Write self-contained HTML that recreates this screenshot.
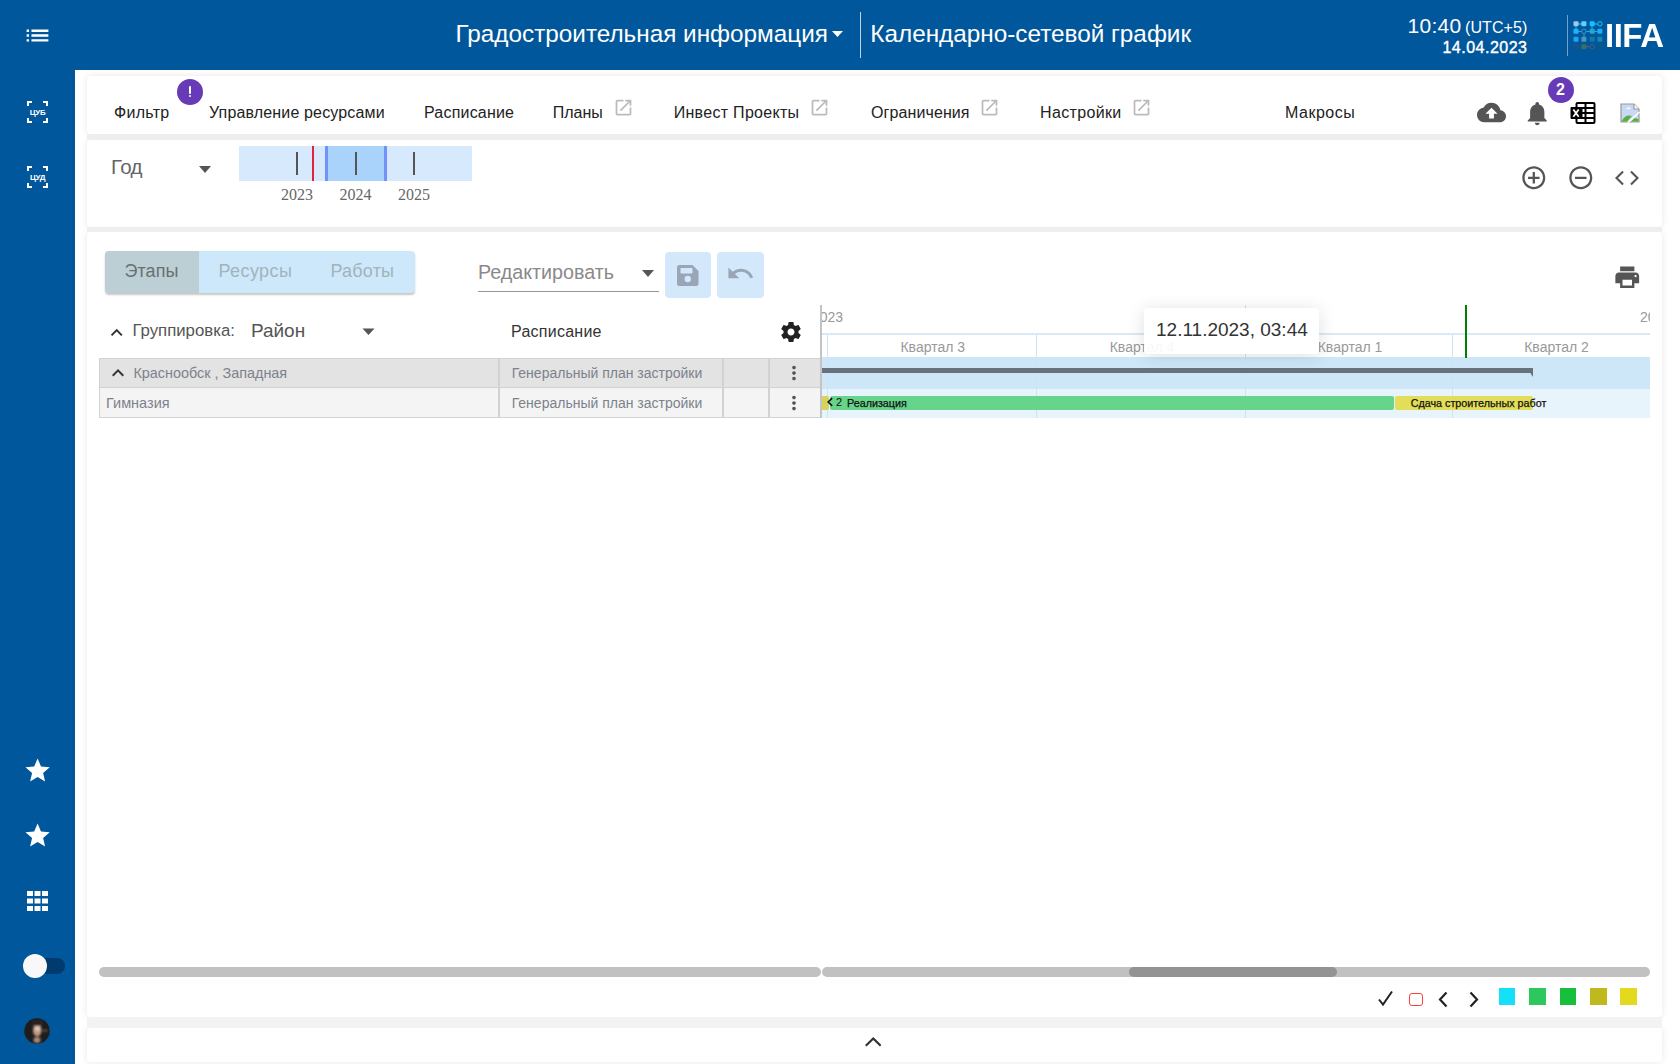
<!DOCTYPE html>
<html><head><meta charset="utf-8">
<style>
*{box-sizing:border-box;margin:0;padding:0}
html,body{width:1680px;height:1064px;overflow:hidden;background:#fff;font-family:"Liberation Sans",sans-serif;}
.a{position:absolute}
.t{position:absolute;white-space:nowrap;line-height:1}
svg{position:absolute;display:block}
.card{position:absolute;left:87px;width:1575px;background:#fff;border-radius:4px;box-shadow:0 0 7px rgba(0,0,0,0.10)}
.gap{position:absolute;left:87px;width:1575px;background:#eeeeee}
</style></head><body>

<!-- sidebar & header -->
<div class="a" style="left:0;top:0;width:1680px;height:70px;background:#01579b"></div>
<div class="a" style="left:0;top:0;width:75px;height:1064px;background:#01579b"></div>

<!-- header content -->
<svg style="left:23px;top:20.5px" width="29" height="29" viewBox="0 0 24 24"><path fill="#fff" d="M3 13h2v-2H3v2zm0 4h2v-2H3v2zm0-8h2V7H3v2zm4 4h14v-2H7v2zm0 4h14v-2H7v2zM7 7v2h14V7H7z"/></svg>
<div class="t" style="left:455.5px;top:21.9px;font-size:24.3px;color:#fff">Градостроительная информация</div>
<svg style="left:832px;top:31px" width="11" height="6" viewBox="0 0 11 6"><path fill="#fff" d="M0 0h11L5.5 6z"/></svg>
<div class="a" style="left:860px;top:12px;width:1px;height:46px;background:rgba(255,255,255,0.75)"></div>
<div class="t" style="left:870.3px;top:21.9px;font-size:24.3px;color:#fff">Календарно-сетевой график</div>
<div class="t" style="left:1407.5px;top:15.4px;font-size:21px;color:#fff;letter-spacing:0.3px">10:40</div>
<div class="t" style="left:1465px;top:19.5px;font-size:16px;color:#fff;letter-spacing:0.1px">(UTC+5)</div>
<div class="t" style="right:152.5px;top:39.5px;font-size:16px;color:#fff;-webkit-text-stroke:0.4px #fff;letter-spacing:0.5px">14.04.2023</div>
<div class="a" style="left:1567px;top:15px;width:1px;height:41px;background:rgba(255,255,255,0.45)"></div>
<svg style="left:1572px;top:20px" width="32" height="30" viewBox="1572 20 32 30">
 <g stroke-width="1">
  <line x1="1576" y1="24" x2="1584" y2="24" stroke="#5dc8f5"/>
  <line x1="1592" y1="24" x2="1600" y2="24" stroke="#2dc0f0"/>
  <line x1="1576" y1="31.5" x2="1600" y2="31.5" stroke="#2aa8d8"/>
  <line x1="1584" y1="31.5" x2="1584" y2="39.5" stroke="#3a9ad0"/>
  <line x1="1576" y1="24" x2="1576" y2="31.5" stroke="#3ab0e8"/>
  <line x1="1592" y1="24" x2="1592" y2="31.5" stroke="#20b0e0"/>
  <line x1="1584" y1="46.7" x2="1592" y2="46.7" stroke="#6a5a6a"/>
 </g>
 <rect x="1573.5" y="21.3" width="5" height="5" rx="1" fill="#9cc8ec"/>
 <rect x="1581.4" y="21.3" width="5" height="5" rx="1" fill="#5dd0ff"/>
 <rect x="1589.7" y="21.3" width="5" height="5" rx="1" fill="#10c0ff"/>
 <circle cx="1599.9" cy="23.8" r="2.2" fill="#01579b" stroke="#2dc0f0" stroke-width="1"/>
 <rect x="1573.5" y="28.8" width="5" height="5" rx="1" fill="#18b8f8"/>
 <circle cx="1583.9" cy="31.3" r="2.2" fill="#01579b" stroke="#3a9ad0" stroke-width="1"/>
 <rect x="1589.7" y="28.8" width="5" height="5" rx="1" fill="#20a8d0"/>
 <rect x="1597.4" y="28.8" width="5" height="5" rx="1" fill="#18b0f0"/>
 <rect x="1573.5" y="36.8" width="5" height="5" rx="1" fill="#18a8f0"/>
 <rect x="1581.4" y="36.8" width="5" height="5" rx="1" fill="#4898b8"/>
 <rect x="1589.7" y="36.8" width="5" height="5" rx="1" fill="#107aa0"/>
 <rect x="1597.4" y="36.8" width="5" height="5" rx="1" fill="#1488b0"/>
 <circle cx="1576.1" cy="46.7" r="2.2" fill="#01579b" stroke="#4a4a6a" stroke-width="0.8"/>
 <rect x="1581.4" y="44.2" width="5" height="5" rx="1" fill="#3a7060"/>
 <circle cx="1592.2" cy="46.7" r="2.2" fill="#01579b" stroke="#5a5a7a" stroke-width="0.8"/>
 <rect x="1597.4" y="44.2" width="5" height="5" rx="1" fill="#0a5a80"/>
</svg>
<div class="t" style="left:1605px;top:18px;font-size:34px;font-weight:bold;color:#fff;transform:scaleX(0.97);transform-origin:0 0;letter-spacing:-0.5px">IIFA</div>

<!-- sidebar icons -->
<div class="a" style="left:27px;top:101px;width:21px;height:22px">
 <div class="a" style="left:0;top:0;width:5px;height:5px;border-left:2px solid #fff;border-top:2px solid #fff"></div>
 <div class="a" style="right:0;top:0;width:5px;height:5px;border-right:2px solid #fff;border-top:2px solid #fff"></div>
 <div class="a" style="left:0;bottom:0;width:5px;height:5px;border-left:2px solid #fff;border-bottom:2px solid #fff"></div>
 <div class="a" style="right:0;bottom:0;width:5px;height:5px;border-right:2px solid #fff;border-bottom:2px solid #fff"></div>
 <div class="t" style="left:0;width:21px;top:8px;text-align:center;font-size:8px;font-weight:bold;color:#fff;letter-spacing:-0.3px">ЦУБ</div>
</div>
<div class="a" style="left:27px;top:166px;width:21px;height:22px">
 <div class="a" style="left:0;top:0;width:5px;height:5px;border-left:2px solid #fff;border-top:2px solid #fff"></div>
 <div class="a" style="right:0;top:0;width:5px;height:5px;border-right:2px solid #fff;border-top:2px solid #fff"></div>
 <div class="a" style="left:0;bottom:0;width:5px;height:5px;border-left:2px solid #fff;border-bottom:2px solid #fff"></div>
 <div class="a" style="right:0;bottom:0;width:5px;height:5px;border-right:2px solid #fff;border-bottom:2px solid #fff"></div>
 <div class="t" style="left:0;width:21px;top:8px;text-align:center;font-size:8px;font-weight:bold;color:#fff;letter-spacing:-0.3px">ЦУД</div>
</div>
<svg style="left:22.6px;top:755.9px" width="29.2" height="29.2" viewBox="0 0 24 24"><path fill="#fff" d="M12 17.27L18.18 21l-1.64-7.03L22 9.24l-7.19-.61L12 2 9.19 8.63 2 9.24l5.46 4.73L5.82 21z"/></svg>
<svg style="left:22.6px;top:821.3px" width="29.2" height="29.2" viewBox="0 0 24 24"><path fill="#fff" d="M12 17.27L18.18 21l-1.64-7.03L22 9.24l-7.19-.61L12 2 9.19 8.63 2 9.24l5.46 4.73L5.82 21z"/></svg>
<svg style="left:26.5px;top:890.5px" width="21" height="20" viewBox="0 0 21 20"><g fill="#fff"><rect x="0" y="0" width="6" height="5"/><rect x="7.5" y="0" width="6" height="5"/><rect x="15" y="0" width="6" height="5"/><rect x="0" y="7.5" width="6" height="5"/><rect x="7.5" y="7.5" width="6" height="5"/><rect x="15" y="7.5" width="6" height="5"/><rect x="0" y="15" width="6" height="5"/><rect x="7.5" y="15" width="6" height="5"/><rect x="15" y="15" width="6" height="5"/></g></svg>
<div class="a" style="left:24px;top:958px;width:41px;height:16px;border-radius:8px;background:#003a6e"></div>
<div class="a" style="left:23px;top:954px;width:24px;height:24px;border-radius:50%;background:#f8f8f8"></div>
<svg style="left:24.4px;top:1018.4px" width="26" height="26" viewBox="0 0 26 26">
 <defs><clipPath id="avc"><circle cx="13" cy="13" r="12.7"/></clipPath><filter id="avb" x="-50%" y="-50%" width="200%" height="200%"><feGaussianBlur stdDeviation="1.1"/></filter></defs>
 <circle cx="13" cy="13" r="12.7" fill="#1e1c1c"/>
 <g clip-path="url(#avc)" filter="url(#avb)">
  <ellipse cx="13.2" cy="12.5" rx="4.2" ry="6" fill="#c09a86"/>
  <ellipse cx="13.5" cy="10.5" rx="3.2" ry="2.5" fill="#e0c2b0"/>
  <ellipse cx="13" cy="22" rx="3.5" ry="3" fill="#a88a78"/>
  <ellipse cx="21" cy="12.5" rx="3" ry="1" fill="#6a584c"/>
  <rect x="8" y="2" width="11" height="6" fill="#2a2420"/>
 </g>
</svg>

<!-- cards -->
<div class="card" style="top:76px;height:58px"></div>
<div class="card" style="top:140px;height:87px"></div>
<div class="card" style="top:232px;height:785px"></div>
<div class="card" style="top:1028px;height:33.5px"></div>
<div class="gap" style="top:134px;height:6px"></div>
<div class="gap" style="top:227px;height:5px"></div>
<div class="gap" style="top:1017px;height:11px;background:#f3f3f3"></div>

<!-- card 1 toolbar -->
<div class="t" style="left:114px;top:104.5px;font-size:16px;color:#222;letter-spacing:0.3px">Фильтр</div>
<div class="a" style="left:177px;top:79px;width:26px;height:26px;border-radius:50%;background:#673ab7"></div>
<div class="a" style="left:188.6px;top:86px;width:2.8px;height:8.3px;border-radius:1px;background:#fff"></div>
<div class="a" style="left:188.6px;top:94.9px;width:2.8px;height:2.3px;border-radius:1px;background:#fff"></div>
<div class="t" style="left:209px;top:104.5px;font-size:16px;color:#222;letter-spacing:0.15px">Управление ресурсами</div>
<div class="t" style="left:424px;top:104.5px;font-size:16px;color:#222;letter-spacing:0.2px">Расписание</div>
<div class="t" style="left:552.7px;top:104.5px;font-size:16px;color:#222">Планы</div>
<div class="t" style="left:673.7px;top:104.5px;font-size:16px;color:#222;letter-spacing:0.3px">Инвест Проекты</div>
<div class="t" style="left:871px;top:104.5px;font-size:16px;color:#222;letter-spacing:0.1px">Ограничения</div>
<div class="t" style="left:1040px;top:104.5px;font-size:16px;color:#222;letter-spacing:0.35px">Настройки</div>
<div class="t" style="left:1285px;top:104.5px;font-size:16px;color:#222;letter-spacing:0.5px">Макросы</div>
<svg style="left:612.5px;top:96.5px" width="21" height="21" viewBox="0 0 24 24"><path fill="#bbb" d="M19 19H5V5h7V3H5c-1.11 0-2 .9-2 2v14c0 1.1.89 2 2 2h14c1.1 0 2-.9 2-2v-7h-2v7zM14 3v2h3.59l-9.83 9.83 1.41 1.41L19 6.41V10h2V3h-7z"/></svg>
<svg style="left:808.5px;top:96.5px" width="21" height="21" viewBox="0 0 24 24"><path fill="#bbb" d="M19 19H5V5h7V3H5c-1.11 0-2 .9-2 2v14c0 1.1.89 2 2 2h14c1.1 0 2-.9 2-2v-7h-2v7zM14 3v2h3.59l-9.83 9.83 1.41 1.41L19 6.41V10h2V3h-7z"/></svg>
<svg style="left:978.5px;top:96.5px" width="21" height="21" viewBox="0 0 24 24"><path fill="#bbb" d="M19 19H5V5h7V3H5c-1.11 0-2 .9-2 2v14c0 1.1.89 2 2 2h14c1.1 0 2-.9 2-2v-7h-2v7zM14 3v2h3.59l-9.83 9.83 1.41 1.41L19 6.41V10h2V3h-7z"/></svg>
<svg style="left:1130.5px;top:96.5px" width="21" height="21" viewBox="0 0 24 24"><path fill="#bbb" d="M19 19H5V5h7V3H5c-1.11 0-2 .9-2 2v14c0 1.1.89 2 2 2h14c1.1 0 2-.9 2-2v-7h-2v7zM14 3v2h3.59l-9.83 9.83 1.41 1.41L19 6.41V10h2V3h-7z"/></svg>
<svg style="left:1477px;top:97.5px" width="29" height="29" viewBox="0 0 24 24"><path fill="#555" d="M19.35 10.04C18.67 6.59 15.64 4 12 4 9.11 4 6.6 5.64 5.35 8.04 2.34 8.36 0 10.91 0 14c0 3.31 2.69 6 6 6h13c2.76 0 5-2.24 5-5 0-2.64-2.05-4.78-4.65-4.96zM14 13v4h-4v-4H7l5-5 5 5h-3z"/></svg>
<svg style="left:1523.3px;top:98.7px" width="28.5" height="28.5" viewBox="0 0 24 24"><path fill="#555" d="M12 22c1.1 0 2-.9 2-2h-4c0 1.1.89 2 2 2zm6-6v-5c0-3.07-1.64-5.640-4.5-6.32V4c0-.83-.67-1.5-1.5-1.5s-1.5.67-1.5 1.5v.68C7.63 5.36 6 7.92 6 11v5l-2 2v1h16v-1l-2-2z"/></svg>
<div class="a" style="left:1547.5px;top:76.5px;width:26px;height:26px;border-radius:50%;background:#673ab7"></div>
<div class="t" style="left:1547.5px;width:26px;text-align:center;top:82px;font-size:16px;font-weight:bold;color:#fff">2</div>
<svg style="left:1570px;top:102px" width="26" height="22" viewBox="0 0 26 22">
 <rect x="6.5" y="1" width="18" height="20" rx="1" fill="#fff" stroke="#000" stroke-width="2"/>
 <line x1="15.5" y1="1" x2="15.5" y2="21" stroke="#000" stroke-width="2"/>
 <line x1="6.5" y1="6" x2="24.5" y2="6" stroke="#000" stroke-width="2"/>
 <line x1="6.5" y1="11" x2="24.5" y2="11" stroke="#000" stroke-width="2"/>
 <line x1="6.5" y1="16" x2="24.5" y2="16" stroke="#000" stroke-width="2"/>
 <rect x="0.5" y="5" width="12" height="12" rx="1" fill="#000"/>
 <path d="M3.3 7.5l5.4 7.2M8.7 7.5l-5.4 7.2" stroke="#fff" stroke-width="1.8"/>
</svg>
<svg style="left:1620px;top:103px" width="21" height="20" viewBox="0 0 21 20">
 <path d="M1 1h13l5 5v13H1z" fill="#c6daf3" stroke="#999" stroke-width="1.2"/>
 <path d="M14 1v5h5" fill="#fff" stroke="#999" stroke-width="1.2"/>
 <path d="M6 6l2.5-2 2.5 2z" fill="#fff"/>
 <path d="M1.6 18.4C4 13 8 11.5 12 13 L7 18.4z" fill="#5ab03a"/>
 <path d="M14 15.5C16 15 18 16 18.4 16.5V18.4H11z" fill="#5ab03a"/>
 <path d="M8 19.5L19.5 9" stroke="#fff" stroke-width="1.6"/>
</svg>

<!-- card 2 -->
<div class="t" style="left:111px;top:157.4px;font-size:20.5px;color:#666;letter-spacing:-0.6px">Год</div>
<svg style="left:198px;top:165px" width="14" height="9" viewBox="0 0 14 9"><path fill="#555" d="M1 1h12L7 8z"/></svg>
<div class="a" style="left:239px;top:145.5px;width:233px;height:35px;background:#d6e9fd"></div>
<div class="a" style="left:326px;top:145.5px;width:60px;height:35px;background:#a9d3fb"></div>
<div class="a" style="left:325px;top:145.5px;width:2.6px;height:35px;background:#7292fa"></div>
<div class="a" style="left:384px;top:145.5px;width:2.6px;height:35px;background:#7292fa"></div>
<div class="a" style="left:296px;top:151.5px;width:2px;height:23px;background:#555"></div>
<div class="a" style="left:354.5px;top:151.5px;width:2px;height:23px;background:#555"></div>
<div class="a" style="left:413px;top:151.5px;width:2px;height:23px;background:#555"></div>
<div class="a" style="left:312.3px;top:145.5px;width:2px;height:35px;background:#e0243c"></div>
<div class="t" style="left:267px;width:60px;text-align:center;top:186.5px;font-family:'Liberation Serif',serif;font-size:16px;color:#666">2023</div>
<div class="t" style="left:325.5px;width:60px;text-align:center;top:186.5px;font-family:'Liberation Serif',serif;font-size:16px;color:#666">2024</div>
<div class="t" style="left:384px;width:60px;text-align:center;top:186.5px;font-family:'Liberation Serif',serif;font-size:16px;color:#666">2025</div>
<svg style="left:1520.2px;top:164.2px" width="27.6" height="27.6" viewBox="0 0 24 24"><path fill="#555" d="M13 7h-2v4H7v2h4v4h2v-4h4v-2h-4V7zm-1-5C6.48 2 2 6.48 2 12s4.48 10 10 10 10-4.48 10-10S17.52 2 12 2zm0 18c-4.41 0-8-3.59-8-8s3.59-8 8-8 8 3.59 8 8-3.59 8-8 8z"/></svg>
<svg style="left:1566.7px;top:164.2px" width="27.6" height="27.6" viewBox="0 0 24 24"><path fill="#555" d="M7 11v2h10v-2H7zm5-9C6.48 2 2 6.48 2 12s4.48 10 10 10 10-4.48 10-10S17.52 2 12 2zm0 18c-4.41 0-8-3.59-8-8s3.59-8 8-8 8 3.59 8 8-3.59 8-8 8z"/></svg>
<svg style="left:1613px;top:164px" width="28" height="28" viewBox="0 0 24 24"><path fill="none" stroke="#555" stroke-width="1.8" d="M8.6 6.4L3 12l5.6 5.6M15.4 6.4L21 12l-5.6 5.6"/></svg>

<!-- card 3 toolbar -->
<div class="a" style="left:105px;top:250.5px;width:310px;height:42px;border-radius:4px;background:#cce8fa;box-shadow:0 2px 2px rgba(0,0,0,0.22);overflow:hidden">
 <div class="a" style="left:0;top:0;width:94px;height:42px;background:#bccfd5"></div>
</div>
<div class="t" style="left:124.4px;top:261.8px;font-size:18px;color:#6a6f72;letter-spacing:0.1px">Этапы</div>
<div class="t" style="left:218.5px;top:261.8px;font-size:18px;color:#a3b3ba;letter-spacing:0.4px">Ресурсы</div>
<div class="t" style="left:330.5px;top:261.8px;font-size:18px;color:#a3b3ba;letter-spacing:0.2px">Работы</div>
<div class="t" style="left:478px;top:262.9px;font-size:19.7px;color:#8a8a8a">Редактировать</div>
<div class="a" style="left:478px;top:291px;width:180.5px;height:1.3px;background:#959595"></div>
<svg style="left:641px;top:269px" width="14" height="9" viewBox="0 0 14 9"><path fill="#555" d="M1 1h12L7 8z"/></svg>
<div class="a" style="left:664.5px;top:251.7px;width:46.5px;height:46.3px;border-radius:4px;background:#d3e8fb"></div>
<div class="a" style="left:717px;top:251.7px;width:46.5px;height:46.3px;border-radius:4px;background:#d3e8fb"></div>
<svg style="left:677px;top:264.7px" width="21.5" height="21" viewBox="0 0 21.5 21"><path fill="#98a6b6" d="M2.5 0h13l6 6v12.5a2.5 2.5 0 0 1-2.5 2.5h-16.5a2.5 2.5 0 0 1-2.5-2.5v-16a2.5 2.5 0 0 1 2.5-2.5z"/><rect x="3.5" y="3" width="12" height="5.5" rx="0.8" fill="#d3e8fb"/><circle cx="10.75" cy="14" r="3.2" fill="#d3e8fb"/></svg>
<svg style="left:725.5px;top:259px" width="29" height="29" viewBox="0 0 24 24"><path fill="#98a6b6" d="M12.5 8c-2.65 0-5.050.99-6.9 2.6L2 7v9h9l-3.62-3.62c1.39-1.16 3.16-1.88 5.12-1.88 3.540 0 6.55 2.31 7.6 5.5l2.37-.78C21.08 11.03 17.15 8 12.5 8z"/></svg>
<svg style="left:1613.1px;top:262.7px" width="28.5" height="28.5" viewBox="0 0 24 24"><path fill="#555" d="M19 8H5c-1.66 0-3 1.34-3 3v6h4v4h12v-4h4v-6c0-1.66-1.34-3-3-3zm-3 11H8v-5h8v5zm3-7c-.55 0-1-.45-1-1s.45-1 1-1 1 .45 1 1-.45 1-1 1zm-1-9H6v4h12V3z"/></svg>

<!-- grouping header -->
<svg style="left:104.75px;top:320.5px" width="23.4" height="23.4" viewBox="0 0 24 24"><path fill="#333" d="M12 8l-6 6 1.41 1.41L12 10.83l4.59 4.58L18 14z"/></svg>
<div class="t" style="left:132.4px;top:323px;font-size:16.8px;color:#555">Группировка:</div>
<div class="t" style="left:250.9px;top:320.9px;font-size:19px;color:#555">Район</div>
<svg style="left:362px;top:327.5px" width="13" height="8" viewBox="0 0 13 8"><path fill="#555" d="M0.5 0.5h12L6.5 7z"/></svg>
<div class="t" style="left:511px;top:323.5px;font-size:16px;color:#333;letter-spacing:0.25px">Расписание</div>
<svg style="left:779px;top:320px" width="24" height="24" viewBox="0 0 24 24"><path fill="#222" d="M19.43 12.98c.04-.32.07-.64.07-.98s-.03-.66-.07-.98l2.11-1.65c.19-.15.24-.42.12-.64l-2-3.460c-.12-.22-.39-.3-.61-.22l-2.49 1c-.52-.4-1.08-.73-1.69-.98l-.38-2.65C14.46 2.18 14.250 2 14 2h-4c-.25 0-.46.18-.49.42l-.38 2.65c-.61.25-1.17.59-1.69.98l-2.49-1c-.23-.09-.49 0-.61.22l-2 3.46c-.13.22-.07.49.12.64l2.11 1.65c-.04.32-.07.65-.07.98s.03.66.07.98l-2.11 1.65c-.19.15-.24.42-.12.64l2 3.46c.12.22.39.3.61.22l2.49-1c.52.4 1.08.73 1.69.98l.38 2.65c.03.24.24.42.49.42h4c.25 0 .46-.18.49-.42l.38-2.65c.61-.25 1.17-.59 1.69-.98l2.49 1c.23.09.49 0 .61-.22l2-3.46c.12-.22.07-.49-.12-.64l-2.11-1.65zM12 15.5c-1.93 0-3.5-1.57-3.5-3.5s1.57-3.5 3.5-3.5 3.5 1.57 3.5 3.5-1.57 3.5-3.5 3.5z"/></svg>

<!-- table -->
<div class="a" style="left:99px;top:358px;width:722px;height:30px;background:#e3e3e3;border-top:1px solid #d2d2d2;border-bottom:1px solid #d2d2d2"></div>
<div class="a" style="left:99px;top:388px;width:722px;height:30px;background:#f4f4f4;border-bottom:1px solid #d2d2d2"></div>
<div class="a" style="left:99px;top:358px;width:1px;height:60px;background:#d2d2d2"></div>
<div class="a" style="left:498px;top:358px;width:1.5px;height:60px;background:#d2d2d2"></div>
<div class="a" style="left:722px;top:358px;width:1.5px;height:60px;background:#d2d2d2"></div>
<div class="a" style="left:768px;top:358px;width:1.5px;height:60px;background:#d2d2d2"></div>
<svg style="left:105.5px;top:361px" width="24" height="24" viewBox="0 0 24 24"><path fill="#333" d="M12 8l-6 6 1.41 1.41L12 10.83l4.59 4.58L18 14z"/></svg>
<div class="t" style="left:133.4px;top:366px;font-size:14.4px;color:#7c828c">Краснообск , Западная</div>
<div class="t" style="left:106px;top:396px;font-size:14.5px;color:#7c828c">Гимназия</div>
<div class="t" style="left:511.7px;top:366.1px;font-size:14px;color:#7c828c">Генеральный план застройки</div>
<div class="t" style="left:511.7px;top:396.4px;font-size:14px;color:#7c828c">Генеральный план застройки</div>
<svg style="left:783.3px;top:361.5px" width="22" height="22" viewBox="0 0 24 24"><path fill="#555" d="M12 8c1.1 0 2-.9 2-2s-.9-2-2-2-2 .9-2 2 .9 2 2 2zm0 2c-1.1 0-2 .9-2 2s.9 2 2 2 2-.9 2-2-.9-2-2-2zm0 6c-1.1 0-2 .9-2 2s.9 2 2 2 2-.9 2-2-.9-2-2-2z"/></svg>
<svg style="left:783.3px;top:391.8px" width="22" height="22" viewBox="0 0 24 24"><path fill="#555" d="M12 8c1.1 0 2-.9 2-2s-.9-2-2-2-2 .9-2 2 .9 2 2 2zm0 2c-1.1 0-2 .9-2 2s.9 2 2 2 2-.9 2-2-.9-2-2-2zm0 6c-1.1 0-2 .9-2 2s.9 2 2 2 2-.9 2-2-.9-2-2-2z"/></svg>

<!-- gantt -->
<div class="a" style="left:822px;top:305px;width:828px;height:113px;overflow:hidden">
 <div class="t" style="left:-10px;top:5px;font-size:14px;color:#999">2023</div>
 <div class="t" style="left:818px;top:5px;font-size:14px;color:#999">2024</div>
 <div class="a" style="left:0;top:28px;width:828px;height:2px;background:#d9eaf6"></div>
 <div class="a" style="left:0;top:52px;width:828px;height:31.5px;background:#cde7f9"></div>
 <div class="a" style="left:0;top:83.5px;width:828px;height:29.5px;background:#e8f4fc"></div>
 <div class="a" style="left:5px;top:29px;width:1px;height:84px;background:#cfe3f3"></div>
 <div class="a" style="left:213.5px;top:29px;width:1px;height:84px;background:#cfe3f3"></div>
 <div class="a" style="left:423px;top:29px;width:1px;height:84px;background:#cfe3f3"></div>
 <div class="a" style="left:629.5px;top:29px;width:1px;height:84px;background:#cfe3f3"></div>
 <div class="t" style="left:6.5px;width:208.5px;text-align:center;top:34.8px;font-size:14px;color:#999">Квартал 3</div>
 <div class="t" style="left:215.5px;width:209px;text-align:center;top:34.8px;font-size:14px;color:#999">Квартал 4</div>
 <div class="t" style="left:425px;width:206px;text-align:center;top:34.8px;font-size:14px;color:#999">Квартал 1</div>
 <div class="t" style="left:630.5px;width:208px;text-align:center;top:34.8px;font-size:14px;color:#999">Квартал 2</div>
 <div class="a" style="left:0;top:63px;width:710.5px;height:4.5px;background:#67737c"></div>
 <svg style="left:704.5px;top:63px" width="6" height="9" viewBox="0 0 6 9"><path fill="#67737c" d="M0 0h6v9z"/></svg>
 <div class="a" style="left:-1px;top:91px;width:7.6px;height:14px;background:#d6d25c;border-radius:0 2px 2px 0"></div>
 <div class="a" style="left:8px;top:91px;width:564px;height:14px;background:#66d48b;border-radius:2px"></div>
 <div class="a" style="left:573px;top:91.4px;width:137.5px;height:13.6px;background:#e3de5a;border-radius:2px"></div>
 <svg style="left:5px;top:91.5px" width="6" height="10" viewBox="0 0 6 10"><path fill="none" stroke="#111" stroke-width="1.6" d="M5.2 1.2L1.2 5l4 3.8"/></svg>
 <div class="t" style="left:14px;top:91.7px;font-size:11px;color:#111">2</div>
 <div class="t" style="left:25px;top:92.5px;font-size:10.75px;color:#111;-webkit-text-stroke:0.25px #111">Реализация</div>
 <div class="t" style="left:588.7px;top:92.5px;font-size:10.75px;color:#111;-webkit-text-stroke:0.25px #111">Сдача строительных работ</div>
 <div class="a" style="left:423px;top:0;width:1px;height:29px;background:#cfe3f3"></div>
 <div class="a" style="left:642.5px;top:0;width:2px;height:52.5px;background:#008000"></div>
</div>
<div class="a" style="left:820px;top:305px;width:1.6px;height:113px;background:#c4c4c4"></div>

<!-- tooltip -->
<div class="a" style="left:1144px;top:307.7px;width:175px;height:46.5px;border-radius:4px;background:rgba(255,255,255,0.92);box-shadow:0 2px 18px rgba(0,0,0,0.13)"></div>
<div class="t" style="left:1156px;top:320.4px;font-size:19px;color:#333">12.11.2023, 03:44</div>

<!-- scrollbars -->
<div class="a" style="left:99px;top:967px;width:721.6px;height:9.6px;border-radius:5px;background:#c1c1c1"></div>
<div class="a" style="left:822px;top:967px;width:828px;height:9.6px;border-radius:5px;background:#c1c1c1"></div>
<div class="a" style="left:1129.4px;top:967px;width:207.4px;height:9.6px;border-radius:5px;background:#939393"></div>

<!-- legend -->
<svg style="left:1377px;top:990px" width="17" height="17" viewBox="0 0 17 17"><path fill="none" stroke="#222" stroke-width="2" d="M2 9.5l4 5L15 1.5"/></svg>
<div class="a" style="left:1409px;top:992.5px;width:13.5px;height:13.3px;border:1.5px solid #ff4040;border-radius:3px"></div>
<svg style="left:1437px;top:991px" width="13" height="17" viewBox="0 0 13 17"><path fill="none" stroke="#222" stroke-width="2.2" d="M9.5 1.5L3 8.5l6.5 7"/></svg>
<svg style="left:1467px;top:991px" width="13" height="17" viewBox="0 0 13 17"><path fill="none" stroke="#222" stroke-width="2.2" d="M3.5 1.5L10 8.5l-6.5 7"/></svg>
<div class="a" style="left:1498.75px;top:988px;width:16.7px;height:16.5px;background:#14e0fa"></div>
<div class="a" style="left:1529.25px;top:988px;width:16.7px;height:16.5px;background:#2dc85d"></div>
<div class="a" style="left:1559.5px;top:988px;width:16.7px;height:16.5px;background:#18bf3a"></div>
<div class="a" style="left:1590px;top:988px;width:16.7px;height:16.5px;background:#c0b91e"></div>
<div class="a" style="left:1620px;top:988px;width:16.7px;height:16.5px;background:#e3d91e"></div>

<!-- card 4 chevron -->
<svg style="left:864.75px;top:1032.5px" width="16.5" height="16.5" viewBox="6 6 12 12"><path fill="none" stroke="#333" stroke-width="1.6" d="M6.6 15.3L12 10l5.4 5.3"/></svg>

</body></html>
